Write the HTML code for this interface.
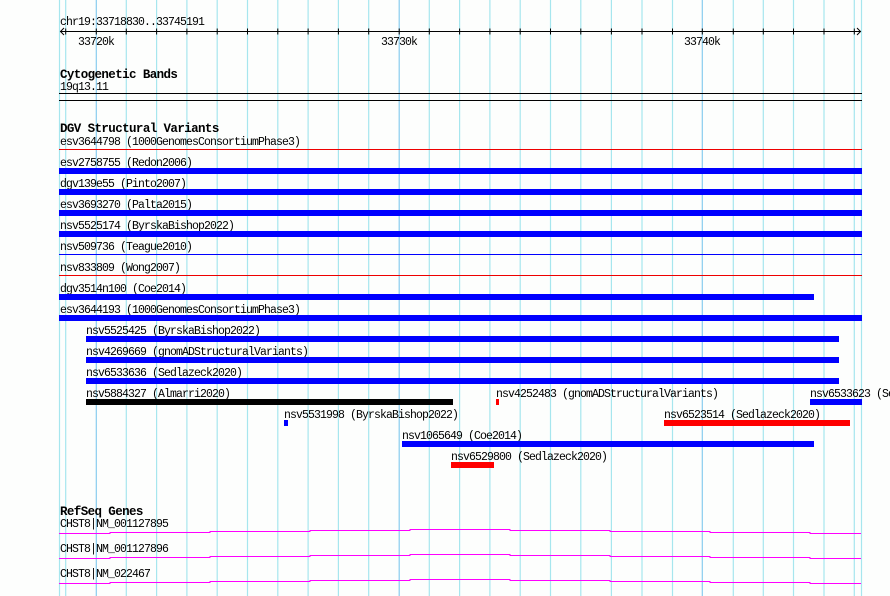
<!DOCTYPE html>
<html><head><meta charset="utf-8"><style>
html,body{margin:0;padding:0;background:#fdfefd;width:890px;height:596px;overflow:hidden}
svg{display:block}
text{font-family:"Liberation Mono",monospace;font-size:11.5px;letter-spacing:-0.9px;fill:#000}
.b{font-weight:bold;font-size:12.5px;letter-spacing:-0.6px}
</style></head><body>
<svg width="890" height="596" xmlns="http://www.w3.org/2000/svg">
<g stroke="#a6e6ee" stroke-width="1.2">
<line x1="59.5" y1="0" x2="59.5" y2="596"/>
<line x1="65.7" y1="0" x2="65.7" y2="596"/>
<line x1="126.3" y1="0" x2="126.3" y2="596"/>
<line x1="156.6" y1="0" x2="156.6" y2="596"/>
<line x1="186.9" y1="0" x2="186.9" y2="596"/>
<line x1="217.2" y1="0" x2="217.2" y2="596"/>
<line x1="247.5" y1="0" x2="247.5" y2="596"/>
<line x1="277.8" y1="0" x2="277.8" y2="596"/>
<line x1="308.1" y1="0" x2="308.1" y2="596"/>
<line x1="338.4" y1="0" x2="338.4" y2="596"/>
<line x1="368.7" y1="0" x2="368.7" y2="596"/>
<line x1="429.3" y1="0" x2="429.3" y2="596"/>
<line x1="459.6" y1="0" x2="459.6" y2="596"/>
<line x1="489.9" y1="0" x2="489.9" y2="596"/>
<line x1="520.2" y1="0" x2="520.2" y2="596"/>
<line x1="550.5" y1="0" x2="550.5" y2="596"/>
<line x1="580.8" y1="0" x2="580.8" y2="596"/>
<line x1="611.4" y1="0" x2="611.4" y2="596"/>
<line x1="642" y1="0" x2="642" y2="596"/>
<line x1="672.5" y1="0" x2="672.5" y2="596"/>
<line x1="733.3" y1="0" x2="733.3" y2="596"/>
<line x1="763.3" y1="0" x2="763.3" y2="596"/>
<line x1="793.5" y1="0" x2="793.5" y2="596"/>
<line x1="824" y1="0" x2="824" y2="596"/>
<line x1="854.3" y1="0" x2="854.3" y2="596"/>
<line x1="861.5" y1="0" x2="861.5" y2="596"/>
</g>
<g stroke="#88ccee" stroke-width="1.2">
<line x1="96.3" y1="0" x2="96.3" y2="596"/>
<line x1="399.2" y1="0" x2="399.2" y2="596"/>
<line x1="702.3" y1="0" x2="702.3" y2="596"/>
</g>
<text x="60" y="25">chr19:33718830..33745191</text>
<g stroke="#000" stroke-width="1">
<line x1="60" y1="31.5" x2="861" y2="31.5"/>
<polyline points="64,28 60.5,31.5 64,35" fill="none"/>
<polyline points="857,28 860.5,31.5 857,35" fill="none"/>
<path d="M65.7 28.5v6M96.3 28.5v6M126.3 28.5v6M156.6 28.5v6M186.9 28.5v6M217.2 28.5v6M247.5 28.5v6M277.8 28.5v6M308.1 28.5v6M338.4 28.5v6M368.7 28.5v6M399.2 28.5v6M429.3 28.5v6M459.6 28.5v6M489.9 28.5v6M520.2 28.5v6M550.5 28.5v6M580.8 28.5v6M611.4 28.5v6M642 28.5v6M672.5 28.5v6M702.3 28.5v6M733.3 28.5v6M763.3 28.5v6M793.5 28.5v6M824 28.5v6M854.3 28.5v6"/>
</g>
<text x="78" y="45">33720k</text>
<text x="381" y="45">33730k</text>
<text x="684" y="45">33740k</text>
<text class="b" x="60" y="78">Cytogenetic Bands</text>
<text x="60" y="90">19q13.11</text>
<rect x="59" y="93" width="803" height="1" fill="#000"/>
<rect x="59" y="100" width="803" height="1" fill="#000"/>
<text class="b" x="60" y="132">DGV Structural Variants</text>
<text x="60" y="145">esv3644798 (1000GenomesConsortiumPhase3)</text>
<rect x="59" y="149" width="803" height="1" fill="#e00"/>
<text x="60" y="166">esv2758755 (Redon2006)</text>
<rect x="59" y="168" width="803" height="6" fill="#0000ff"/>
<text x="60" y="187">dgv139e55 (Pinto2007)</text>
<rect x="59" y="189" width="803" height="6" fill="#0000ff"/>
<text x="60" y="208">esv3693270 (Palta2015)</text>
<rect x="59" y="210" width="803" height="6" fill="#0000ff"/>
<text x="60" y="229">nsv5525174 (ByrskaBishop2022)</text>
<rect x="59" y="231" width="803" height="6" fill="#0000ff"/>
<text x="60" y="250">nsv509736 (Teague2010)</text>
<rect x="59" y="254" width="803" height="1" fill="#0000ff"/>
<text x="60" y="271">nsv833809 (Wong2007)</text>
<rect x="59" y="275" width="803" height="1" fill="#e00"/>
<text x="60" y="292">dgv3514n100 (Coe2014)</text>
<rect x="59" y="294" width="755" height="6" fill="#0000ff"/>
<text x="60" y="313">esv3644193 (1000GenomesConsortiumPhase3)</text>
<rect x="59" y="315" width="803" height="6" fill="#0000ff"/>
<text x="86" y="334">nsv5525425 (ByrskaBishop2022)</text>
<rect x="86" y="336" width="753" height="6" fill="#0000ff"/>
<text x="86" y="355">nsv4269669 (gnomADStructuralVariants)</text>
<rect x="86" y="357" width="753" height="6" fill="#0000ff"/>
<text x="86" y="376">nsv6533636 (Sedlazeck2020)</text>
<rect x="86" y="378" width="753" height="6" fill="#0000ff"/>
<text x="86" y="397">nsv5884327 (Almarri2020)</text>
<rect x="86" y="399" width="367" height="6" fill="#000"/>
<text x="496" y="397">nsv4252483 (gnomADStructuralVariants)</text>
<rect x="496" y="399" width="3" height="6" fill="#ff0000"/>
<text x="810" y="397">nsv6533623 (Se</text>
<rect x="810" y="399" width="52" height="6" fill="#0000ff"/>
<text x="284" y="418">nsv5531998 (ByrskaBishop2022)</text>
<rect x="284" y="420" width="4" height="6" fill="#0000ff"/>
<text x="664" y="418">nsv6523514 (Sedlazeck2020)</text>
<rect x="664" y="420" width="186" height="6" fill="#ff0000"/>
<text x="402" y="439">nsv1065649 (Coe2014)</text>
<rect x="402" y="441" width="412" height="6" fill="#0000ff"/>
<text x="451" y="460">nsv6529800 (Sedlazeck2020)</text>
<rect x="451" y="462" width="43" height="6" fill="#ff0000"/>
<text class="b" x="60" y="515">RefSeq Genes</text>
<text x="60" y="527">CHST8|NM_001127895</text>
<text x="60" y="552">CHST8|NM_001127896</text>
<text x="60" y="577">CHST8|NM_022467</text>
<g fill="none" stroke="#ff00ff" stroke-width="1">
<path d="M59 533.5H110V532.5H210V531.5H310V530.5H410V529.5H510V530.5H610V531.5H710V532.5H810V533.5H861"/>
<path d="M59 558.5H110V557.5H210V556.5H310V555.5H410V554.5H510V555.5H610V556.5H710V557.5H810V558.5H861"/>
<path d="M59 583.5H110V582.5H210V581.5H310V580.5H410V579.5H510V580.5H610V581.5H710V582.5H810V583.5H861"/>
</g>
</svg>
</body></html>
